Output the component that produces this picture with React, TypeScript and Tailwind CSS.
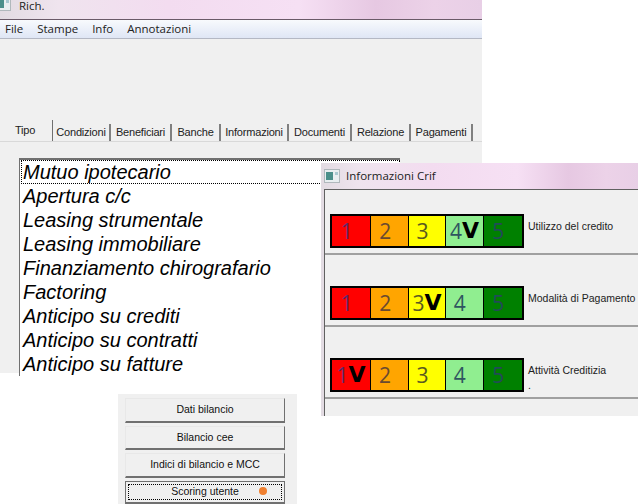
const UI_FONT = "font-['Liberation_Sans',Arial,sans-serif]";
const SEGOE = "font-['Open_Sans','Noto_Sans',sans-serif]";

const TITLE_BG =
  "bg-[linear-gradient(90deg,#e2dbe2_0%,#efe4ee_12%,#f3dcf0_35%,#f6e0f4_62%,#e6c8e2_78%,#ecd2e8_90%,#e8cfe6_100%)]";

const TABS = ["Condizioni", "Beneficiari", "Banche", "Informazioni", "Documenti", "Relazione", "Pagamenti"];
const TAB_WIDTHS = ["w-[58px]", "w-[61px]", "w-[49px]", "w-[68px]", "w-[63px]", "w-[59px]", "w-[62px]"];

const LOANS = [
  "Apertura c/c",
  "Leasing strumentale",
  "Leasing immobiliare",
  "Finanziamento chirografario",
  "Factoring",
  "Anticipo su crediti",
  "Anticipo su contratti",
  "Anticipo su fatture",
];

const CELLS = [
  { n: 1, bg: "bg-[#ff0000]", fg: "text-[#5a2a6a]", w: "w-[39px]" },
  { n: 2, bg: "bg-[#ffa500]", fg: "text-[#6a4a30]", w: "w-[37px]" },
  { n: 3, bg: "bg-[#ffff00]", fg: "text-[#5a5a20]", w: "w-[37px]" },
  { n: 4, bg: "bg-[#90ee90]", fg: "text-[#2f5560]", w: "w-[37px]" },
  { n: 5, bg: "bg-[#008000]", fg: "text-[#234a5a]", w: "w-[39px]" },
];

function Rating({ checked }: { checked: number }) {
  return (
    <div className="flex h-[34px] w-[194px] shrink-0 gap-px border-2 border-black bg-black">
      {CELLS.map((c) => (
        <div key={c.n} className={`${c.bg} ${c.w} flex items-center justify-center ${c.n === checked ? "" : "pr-[9px]"}`}>
          <span className={`${SEGOE} pt-[1px] text-[21px] leading-none ${c.fg}`}>{c.n}</span>
          {c.n === checked && (
            <span className="font-['DejaVu_Sans',sans-serif] text-[22px] leading-none font-bold text-black">V</span>
          )}
        </div>
      ))}
    </div>
  );
}

function CrifRow({ checked, label, dot }: { checked: number; label: string; dot?: boolean }) {
  return (
    <div className="flex h-[41px] items-start gap-[4px] border-b-2 border-[#a0a0a0] pl-[5px]">
      <Rating checked={checked} />
      <div className={`${UI_FONT} whitespace-nowrap pt-[5px] text-[10.5px] leading-[15px] text-[#222]`}>
        <div>{label}</div>
        {dot && <div>.</div>}
      </div>
    </div>
  );
}

function AppIcon() {
  return (
    <svg width="16" height="14" viewBox="0 0 16 14" className="shrink-0">
      <rect x="0.5" y="0.5" width="15" height="13" fill="#e8eef0" stroke="#b0b8bc" />
      <rect x="2" y="3" width="7" height="8" fill="#4a8f8a" />
      <rect x="11" y="3" width="3" height="3" fill="#a8c8d0" />
    </svg>
  );
}

function ActionButton({ label, height, focus }: { label: string; height: string; focus?: boolean }) {
  return (
    <button
      type="button"
      className={`${height} relative w-[160px] border border-[#e8e8e8] border-r-[#707070] border-b-2 border-b-[#707070] bg-[#f0f0f0] ${UI_FONT} text-[10.5px] text-[#111] ${focus ? "border-t-[#707070] border-l-[#707070]" : ""}`}
    >
      {focus && (
        <span className="absolute inset-[2px] flex items-center justify-center border border-dotted border-black">
          {label}
          <span className="absolute right-[14px] top-[2px] h-[8px] w-[8px] rounded-full bg-[#f08030]" />
        </span>
      )}
      {!focus && label}
    </button>
  );
}

export default function App() {
  return (
    <div className={`relative h-[504px] w-[638px] overflow-hidden bg-white ${SEGOE}`}>
      {/* main window */}
      <div className="absolute left-0 top-0 flex h-[373px] w-[482px] flex-col bg-[#f0f0f0]">
        <div className={`flex h-[20px] shrink-0 items-start gap-[8px] border-b border-[#6a5a68] ${TITLE_BG}`}>
          <div className="-ml-[5px] -mt-[3px]"><AppIcon /></div>
          <span className="text-[11.5px] leading-[11px] text-[#222]">Rich.</span>
        </div>
        <div className="flex h-[19px] shrink-0 items-center gap-[14px] border-b border-[#b4b8c4] bg-[linear-gradient(180deg,#f8fafd_0%,#dfe6f5_100%)] pl-[5px] text-[11.5px] text-[#222]">
          <span>File</span>
          <span>Stampe</span>
          <span>Info</span>
          <span>Annotazioni</span>
        </div>

        <div className={`mt-[83px] flex h-[20px] items-end border-b border-[#d9d9d9] pl-[8px] ${UI_FONT} text-[11px] tracking-[-0.2px] text-[#222]`}>
          <div className="relative z-10 flex h-[21px] w-[45px] items-center justify-center border-r border-[#707070] bg-[#f0f0f0] pb-[1px] pr-[10px] text-[11px]">
            Tipo
          </div>
          {TABS.map((t, i) => (
            <div
              key={t}
              className={`flex h-[17px] ${TAB_WIDTHS[i]} items-center justify-center border-r-2 border-[#808080] whitespace-nowrap`}
            >
              {t}
            </div>
          ))}
        </div>

        <div className={`ml-[19px] mt-[16px] w-[381px] flex-1 border-t-2 border-l border-[#707070] bg-white pl-[3px] ${UI_FONT} text-[20px] italic leading-[24px] text-black`}>
          <div className="-ml-[2px] h-[24px] border border-dotted border-black pl-[1px] leading-[22px]">Mutuo ipotecario</div>
          {LOANS.map((l) => (
            <div key={l} className="h-[24px] whitespace-nowrap">{l}</div>
          ))}
        </div>
      </div>

      {/* informazioni crif */}
      <div className={`absolute left-[321px] top-[163px] flex h-[253px] w-[317px] flex-col pl-[3px] ${TITLE_BG}`}>
        <div className="flex h-[26px] shrink-0 items-center gap-[6px] text-[11.5px] text-[#222]">
          <AppIcon />
          <span>Informazioni Crif</span>
        </div>
        <div className="flex-1 border-t border-l border-[#606060] bg-[#f0f0f0] pt-[24px]">
          <CrifRow checked={4} label="Utilizzo del credito" />
          <div className="h-[31px]" />
          <CrifRow checked={3} label="Modalità di Pagamento" />
          <div className="h-[31px]" />
          <CrifRow checked={1} label="Attività Creditizia" dot />
        </div>
      </div>

      {/* bottom buttons */}
      <div className="absolute left-[118px] top-[394px] flex h-[110px] w-[179px] flex-col gap-[3px] bg-[#f0f0f0] pl-[7px] pt-[4px]">
        <ActionButton label="Dati bilancio" height="h-[25px]" />
        <ActionButton label="Bilancio cee" height="h-[24px]" />
        <ActionButton label="Indici di bilancio e MCC" height="h-[25px]" />
        <ActionButton label="Scoring utente" height="h-[23px]" focus />
      </div>
    </div>
  );
}
